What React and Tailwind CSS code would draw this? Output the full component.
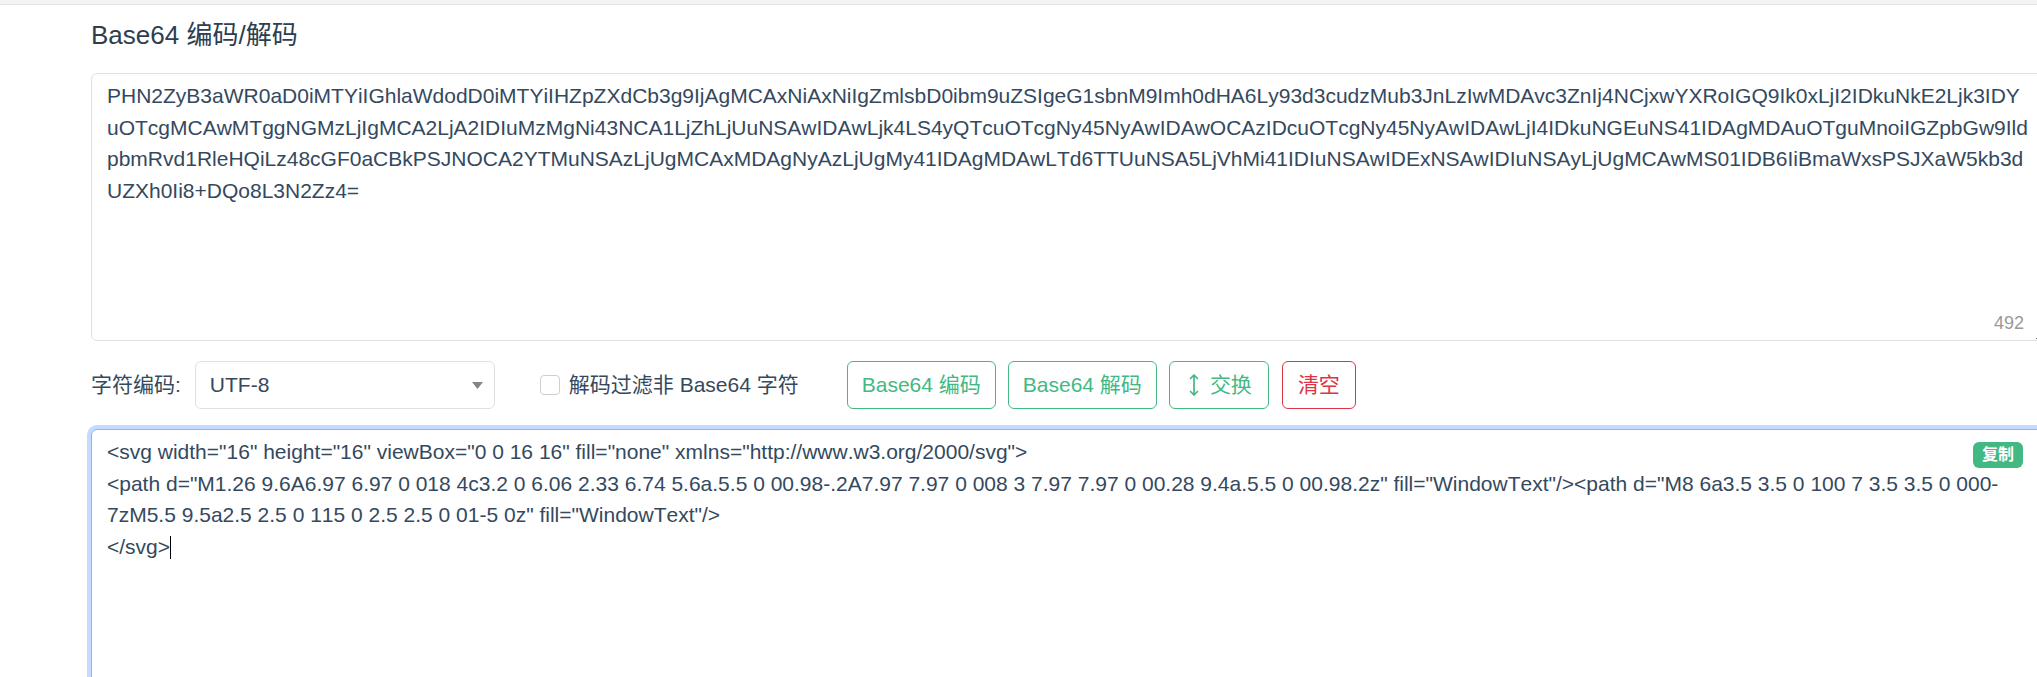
import React from "react";

const SVG_TEXT =
  '<svg width="16" height="16" viewBox="0 0 16 16" fill="none" xmlns="http://www.w3.org/2000/svg">\r\n' +
  '<path d="M1.26 9.6A6.97 6.97 0 018 4c3.2 0 6.06 2.33 6.74 5.6a.5.5 0 00.98-.2A7.97 7.97 0 008 3 7.97 7.97 0 00.28 9.4a.5.5 0 00.98.2z" fill="WindowText"/>' +
  '<path d="M8 6a3.5 3.5 0 100 7 3.5 3.5 0 000-7zM5.5 9.5a2.5 2.5 0 115 0 2.5 2.5 0 01-5 0z" fill="WindowText"/>\r\n' +
  "</svg>";

const B64 = btoa(SVG_TEXT);
const EDITOR_TEXT = SVG_TEXT.replace(/\r\n/g, "\n");

const FONT = { fontFamily: '"Liberation Sans", "Noto Sans CJK SC", sans-serif' };

export default function App() {
  return (
    <div
      className="w-full h-[677px] overflow-hidden bg-white text-[#34495e] [font-kerning:none]"
      style={FONT}
    >
      <div className="h-[5px] bg-[#f4f4f4] border-b border-[#e6e6e6]" />
      <div className="pl-[91px]">
        <h2 className="mt-[12px] text-[26px] leading-[36px] font-normal text-[#2c3e50]">
          Base64 编码/解码
        </h2>

        <div className="relative mt-[20px] w-[1954px]">
          <textarea
            readOnly
            defaultValue={B64}
            spellCheck={false}
            className="block w-[1954px] h-[268px] border border-[#dee2e6] rounded-[6px] px-[15px] pt-[6px] text-[21px] leading-[1.5] text-[#34495e] bg-white outline-none break-all [font-kerning:none]"
            style={FONT}
          />
          <span className="absolute right-[21px] bottom-[9px] text-[18px] leading-[18px] text-[#999999]">
            492
          </span>
        </div>

        <div className="mt-[20px] h-[48px] flex items-center text-[21px]">
          <span>字符编码:</span>
          <div className="ml-[14px] w-[300px] h-[48px] border border-[#dee2e6] rounded-[6px] flex items-center justify-between pl-[14px] pr-[11px] bg-white">
            <span>UTF-8</span>
            <svg width="11" height="7" viewBox="0 0 11 7">
              <path d="M0 0h11L5.5 7z" fill="#858585" />
            </svg>
          </div>
          <span className="ml-[45px] w-[20px] h-[20px] border border-[#cfcfcf] rounded-[4px] bg-white" />
          <span className="ml-[9px]">解码过滤非 Base64 字符</span>

          <button className="ml-[48px] h-[48px] px-[14px] border border-[#42b983] rounded-[6px] text-[#42b983] bg-white">
            Base64 编码
          </button>
          <button className="ml-[12px] h-[48px] px-[14px] border border-[#42b983] rounded-[6px] text-[#42b983] bg-white">
            Base64 解码
          </button>
          <button className="ml-[12px] h-[48px] pl-[18px] pr-[16px] border border-[#42b983] rounded-[6px] text-[#42b983] bg-white flex items-center">
            <svg width="12" height="24" viewBox="0 0 12 24" fill="none" stroke="#42b983" strokeWidth="1.7" strokeLinecap="round" strokeLinejoin="round">
              <path d="M6 2v20M2.5 5.5L6 2l3.5 3.5M2.5 18.5L6 22l3.5-3.5" />
            </svg>
            <span className="ml-[10px]">交换</span>
          </button>
          <button className="ml-[13px] h-[48px] px-[15px] border border-[#dc3545] rounded-[6px] text-[#dc3545] bg-white">
            清空
          </button>
        </div>

        <div className="relative mt-[20px] w-[1954px] h-[300px] border border-[#86b7fe] rounded-[6px] shadow-[0_0_0_4px_#c2dbfe] bg-white px-[15px] pt-[6px] text-[21px] leading-[1.5] text-[#34495e] whitespace-pre-wrap break-words">
          {EDITOR_TEXT}
          <span className="inline-block w-[1px] h-[23px] bg-black align-[-5px]" />
          <span className="absolute right-[21px] top-[12px] w-[50px] h-[26px] rounded-[6px] bg-[#42b983] text-white text-[16px] leading-[26px] font-bold text-center whitespace-nowrap">
            复制
          </span>
        </div>
      </div>
    </div>
  );
}
